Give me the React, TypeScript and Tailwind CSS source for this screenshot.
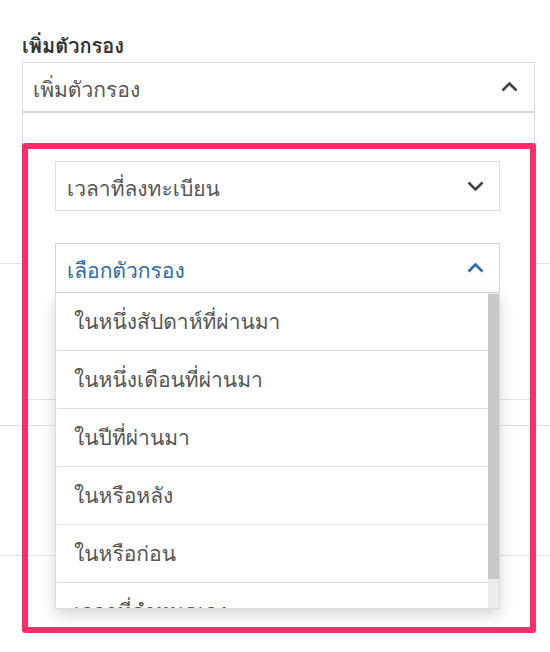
import React from 'react';

const thai = { fontFamily: '"Loma", "Waree", "Garuda", "Tlwg Typo", "Noto Sans Thai Looped", "Noto Sans Thai", "Tahoma", "Noto Sans", sans-serif' };

const options = [
  'ในหนึ่งสัปดาห์ที่ผ่านมา',
  'ในหนึ่งเดือนที่ผ่านมา',
  'ในปีที่ผ่านมา',
  'ในหรือหลัง',
  'ในหรือก่อน',
  'เวลาที่กำหนดเอง',
];

const Chevron: React.FC<{ up?: boolean; color: string }> = ({ up, color }) => (
  <svg width="17" height="10" viewBox="0 0 17 10" fill="none">
    <polyline
      points={up ? '1.5,8.5 8.5,1.5 15.5,8.5' : '1.5,1.5 8.5,8.5 15.5,1.5'}
      stroke={color}
      strokeWidth="2.6"
    />
  </svg>
);

export default function App() {
  return (
    <div className="relative w-[550px] h-[652px] bg-white overflow-hidden" style={thai}>
      {/* page behind the highlight */}
      <div className="h-[264px] border-b border-[#e3e3e3]">
        <div className="pt-[33px] pl-[22px] h-[62px] text-[20px] leading-[26px] font-bold text-[#333]">เพิ่มตัวกรอง</div>
        <div className="ml-[22px] w-[513px] h-[202px] border border-[#dcdcdc] border-b-0">
          <div className="h-[50px] border-b-2 border-[#dcdcdc] flex items-center justify-between pl-[10px] pr-[16px]">
            <span className="text-[21px] text-[#555] pt-[6px]">เพิ่มตัวกรอง</span>
            <Chevron up color="#444" />
          </div>
        </div>
      </div>
      <div className="h-[162px] border-b border-[#e3e3e3]" />
      <div className="h-[130px] border-b border-[#e3e3e3]" />

      {/* highlighted area */}
      <div className="absolute left-[22px] top-[143px] w-[514px] h-[490px] bg-white border-[6px] border-[#ff2d6b] rounded-[3px]">
        <div className="pt-[12px]">
          <div className="ml-[27px] w-[445px] h-[50px] border border-[#dcdcdc] flex items-center justify-between pl-[11px] pr-[15px]">
            <span className="text-[21px] text-[#555] pt-[6px]">เวลาที่ลงทะเบียน</span>
            <Chevron color="#444" />
          </div>
          <div className="relative z-10 mt-[32px] ml-[27px] w-[445px]">
            <div className="h-[50px] border border-[#d4d4d4] flex items-center justify-between pl-[11px] pr-[15px]">
              <span className="text-[21px] text-[#2c6aa3] pt-[6px]">เลือกตัวกรอง</span>
              <Chevron up color="#2c6aa3" />
            </div>
            <div className="absolute left-0 top-full w-[445px] h-[316px] bg-white border border-[#dcdcdc] border-t-0 shadow-[0_6px_14px_rgba(0,0,0,0.16)] flex">
              <div className="flex-1 overflow-hidden pl-[1px]">
                {options.map((o) => (
                  <div key={o} className="h-[58px] border-b border-[#e0e0e0] flex items-center pl-[17px] text-[21px] text-[#555]">
                    {o}
                  </div>
                ))}
              </div>
              <div className="w-[11px] bg-[#ececec] flex flex-col pt-[1px]">
                <div className="h-[285px] bg-[#c8c8c8]" />
              </div>
            </div>
          </div>
          <div className="h-[107px] border-b border-[#e3e3e3]" />
          <div className="h-[26px] border-b border-[#e3e3e3]" />
          <div className="h-[130px] border-b border-[#e3e3e3]" />
        </div>
      </div>
    </div>
  );
}
